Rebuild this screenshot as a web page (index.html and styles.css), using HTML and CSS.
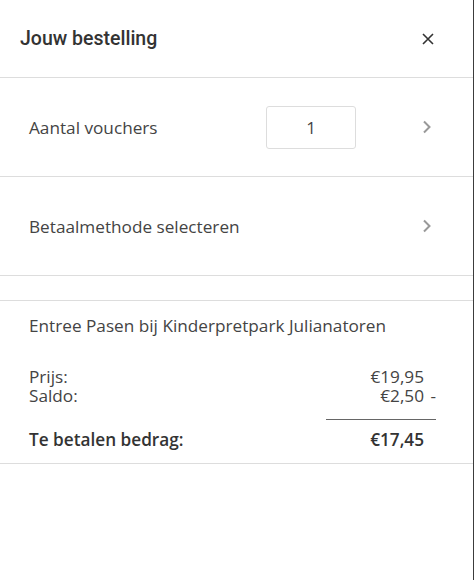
FILE: index.html
```html
<!DOCTYPE html>
<html lang="nl">
<head>
<meta charset="UTF-8">
<meta name="viewport" content="width=device-width, initial-scale=1.0">
<title>Jouw bestelling</title>
<link rel="stylesheet" href="styles.css">
</head>
<body>

<div class="order-panel">
  <div class="order-header">
    <h2>Jouw bestelling</h2>
    <span class="close">
      <svg width="12" height="12" viewBox="0 0 12 12"><path d="M1 1 L11 11 M11 1 L1 11" fill="none" stroke="#333" stroke-width="1.6"/></svg>
    </span>
  </div>

  <div class="order-row">
    <span class="row-label">Aantal vouchers</span>
    <div class="qty-box">1</div>
    <span class="chevron">
      <svg width="10" height="14" viewBox="0 0 10 14"><path d="M2 1.5 L7.5 7 L2 12.5" fill="none" stroke="#999" stroke-width="2"/></svg>
    </span>
  </div>

  <div class="order-row">
    <span class="row-label">Betaalmethode selecteren</span>
    <span class="chevron">
      <svg width="10" height="14" viewBox="0 0 10 14"><path d="M2 1.5 L7.5 7 L2 12.5" fill="none" stroke="#999" stroke-width="2"/></svg>
    </span>
  </div>

  <div class="spacer"></div>

  <div class="summary">
    <div class="summary-title">Entree Pasen bij Kinderpretpark Julianatoren</div>
    <div class="summary-line">
      <span>Prijs:</span>
      <span class="amount">€19,95<span class="sign"></span></span>
    </div>
    <div class="summary-line">
      <span>Saldo:</span>
      <span class="amount">€2,50<span class="sign">-</span></span>
    </div>
    <div class="summary-rule"></div>
    <div class="summary-line total">
      <span>Te betalen bedrag:</span>
      <span class="amount">€17,45<span class="sign"></span></span>
    </div>
  </div>
</div>

</body>
</html>
```

FILE: styles.css
```css
body {
  margin: 0;
  font-family: "Open Sans", Arial, sans-serif;
  color: #444;
  background-color: #fff;
}
.order-panel {
  width: 473px;
  min-height: 580px;
  border-right: 1px solid #3c3c3c;
  background-color: white;
}
.order-header {
  display: flex;
  justify-content: space-between;
  align-items: center;
  height: 77px;
  padding: 0 39px 0 20px;
  border-bottom: 1px solid #ddd;
}
.order-header h2 {
  margin: 0;
  font-family: Roboto, Arial, sans-serif;
  font-weight: 500;
  font-size: 19.5px;
  color: #333;
}
.close {
  display: flex;
}
.order-row {
  display: flex;
  align-items: center;
  height: 98px;
  padding: 0 41px 0 29px;
  border-bottom: 1px solid #ddd;
  font-size: 17.2px;
}
.row-label {
  flex: 1;
}
.qty-box {
  width: 88px;
  height: 41px;
  margin-right: 66px;
  border: 1px solid #ddd;
  border-radius: 3px;
  display: flex;
  align-items: center;
  justify-content: center;
  font-size: 17px;
  color: #444;
}
.chevron {
  display: flex;
}
.spacer {
  height: 24px;
  border-bottom: 1px solid #ddd;
}
.summary {
  padding: 13px 37px 14px 29px;
  border-bottom: 1px solid #ddd;
  font-size: 17.2px;
}
.summary-title {
  line-height: 23px;
  margin-bottom: 30px;
}
.summary-line {
  display: flex;
  justify-content: space-between;
  line-height: 19px;
}
.amount {
  display: flex;
}
.sign {
  width: 12px;
  text-align: right;
}
.summary-rule {
  width: 110px;
  margin: 14px 0 10px auto;
  border-top: 1px solid #666;
}
.total {
  font-weight: 600;
  color: #333;
}
```
